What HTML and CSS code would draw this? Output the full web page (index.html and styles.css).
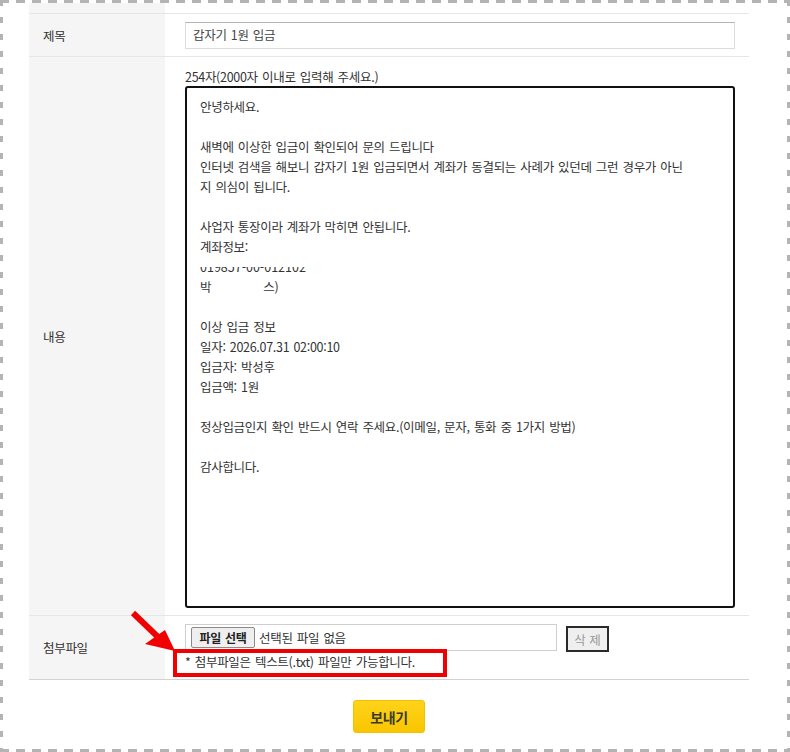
FILE: index.html
```html
<!DOCTYPE html>
<html lang="ko">
<head>
<meta charset="utf-8">
<title>문의하기</title>
<link rel="stylesheet" href="styles.css">
</head>
<body>
<div class="page">
  <div class="form">
    <div class="row row-cut">
      <div class="label"></div>
      <div class="field"></div>
    </div>
    <div class="row row-title">
      <div class="label">제목</div>
      <div class="field">
        <div class="input">갑자기 1원 입금</div>
      </div>
    </div>
    <div class="row row-content">
      <div class="label">내용</div>
      <div class="field">
        <div class="counter">254자(2000자 이내로 입력해 주세요.)</div>
        <div class="textarea">
          <div class="line">안녕하세요.</div>
          <div class="line"></div>
          <div class="line">새벽에 이상한 입금이 확인되어 문의 드립니다</div>
          <div class="line">인터넷 검색을 해보니 갑자기 1원 입금되면서 계좌가 동결되는 사례가 있던데 그런 경우가 아닌</div>
          <div class="line">지 의심이 됩니다.</div>
          <div class="line"></div>
          <div class="line">사업자 통장이라 계좌가 막히면 안됩니다.</div>
          <div class="line">계좌정보:</div>
          <div class="line redacted">019857-00-012102</div>
          <div class="line">박<span class="gap">스)</span></div>
          <div class="line"></div>
          <div class="line">이상 입금 정보</div>
          <div class="line">일자: 2026.07.31 02:00:10</div>
          <div class="line">입금자: 박성후</div>
          <div class="line">입금액: 1원</div>
          <div class="line"></div>
          <div class="line">정상입금인지 확인 반드시 연락 주세요.(이메일, 문자, 통화 중 1가지 방법)</div>
          <div class="line"></div>
          <div class="line">감사합니다.</div>
        </div>
      </div>
    </div>
    <div class="row row-file">
      <div class="label">첨부파일</div>
      <div class="field">
        <div class="file-line">
          <div class="file-box">
            <span class="file-btn">파일 선택</span>
            <span class="file-name">선택된 파일 없음</span>
          </div>
          <button class="del-btn" type="button">삭 제</button>
        </div>
        <div class="note">* 첨부파일은 텍스트(.txt) 파일만 가능합니다.</div>
      </div>
    </div>
  </div>
  <div class="actions">
    <button class="submit" type="button">보내기</button>
  </div>
</div>
<svg class="annotation" width="790" height="752" viewBox="0 0 790 752" aria-hidden="true">
  <line x1="133" y1="613" x2="158" y2="637" stroke="#f00000" stroke-width="6"/>
  <polygon points="145,644 165,630 175,651" fill="#f00000"/>
  <rect x="175" y="651" width="270" height="24" fill="none" stroke="#f00000" stroke-width="4"/>
</svg>
</body>
</html>
```

FILE: styles.css
```css
html, body {
  margin: 0;
  padding: 0;
  background: #fff;
}

body {
  position: relative;
  width: 790px;
  height: 752px;
  overflow: hidden;
  font-family: "Noto Sans CJK KR", "Liberation Sans", sans-serif;
  font-size: 12.5px;
  color: #333;
  letter-spacing: -0.3px;
  word-spacing: 1px;
}

.page {
  box-sizing: border-box;
  width: 790px;
  height: 752px;
  padding: 3px 41px 3px 29px;
  background:
    repeating-linear-gradient(90deg, #b4b4b4 0 9px, transparent 9px 16px) left top / 100% 3px no-repeat,
    repeating-linear-gradient(90deg, #b4b4b4 0 9px, transparent 9px 16px) left bottom / 100% 3px no-repeat,
    repeating-linear-gradient(180deg, #b4b4b4 0 6px, transparent 6px 17px) left top / 3px 100% no-repeat,
    repeating-linear-gradient(180deg, #b4b4b4 0 6px, transparent 6px 17px) right top / 3px 100% no-repeat,
    #fff;
}

.form {
  width: 720px;
}

.row {
  display: grid;
  grid-template-columns: 136px 1fr;
  border-bottom: 1px solid #e6e6e6;
}

.row-cut {
  height: 10px;
}

.row-file {
  border-bottom-color: #d2d2d2;
}

.label {
  display: flex;
  align-items: center;
  padding-left: 14px;
  background: #f5f5f5;
  color: #333;
}

.field {
  padding: 8px 14px 7px 20px;
}

.row-cut .field {
  padding: 0;
}

.input {
  box-sizing: border-box;
  height: 27px;
  border: 1px solid #dcdcdc;
  border-top-color: #b5b5b5;
  padding-left: 7px;
  line-height: 24px;
  color: #444;
}

.row-content .field {
  padding-top: 10px;
}

.counter {
  height: 19px;
  line-height: 19px;
  color: #333;
}

.textarea {
  box-sizing: border-box;
  height: 522px;
  border: 2px solid #111;
  border-radius: 3px;
  padding: 9px 13px;
  color: #333;
}

.line {
  height: 20px;
  line-height: 20px;
  white-space: nowrap;
}

.redacted {
  clip-path: inset(10px 0 0 0);
  letter-spacing: 0;
}

.gap {
  margin-left: 52px;
}

.row-file .field {
  padding: 8px 14px 6px 20px;
}

.file-line {
  display: flex;
  align-items: flex-start;
  height: 27px;
}

.file-box {
  box-sizing: border-box;
  display: flex;
  align-items: center;
  width: 372px;
  height: 27px;
  border: 1px solid #cfcfcf;
  padding: 0 5px;
}

.file-btn {
  box-sizing: border-box;
  display: flex;
  align-items: center;
  justify-content: center;
  width: 64px;
  height: 21px;
  border: 1px solid #8a8a8a;
  border-radius: 2px;
  background: #efefef;
  color: #222;
  font-weight: 700;
  font-size: 12px;
  letter-spacing: -0.3px;
}

.file-name {
  margin-left: 4px;
  color: #333;
}

.del-btn {
  box-sizing: border-box;
  width: 43px;
  height: 26px;
  margin: 2px 0 0 9px;
  padding: 0;
  border: 2px solid #2a2a2a;
  background: #efefef;
  color: #9a9a9a;
  font-family: inherit;
  font-size: 12.5px;
  letter-spacing: 0;
}

.note {
  height: 22px;
  line-height: 22px;
  color: #333;
}

.actions {
  width: 720px;
  display: flex;
  justify-content: center;
  padding-top: 20px;
}

.submit {
  box-sizing: border-box;
  width: 72px;
  height: 33px;
  padding: 0;
  border: 1px solid #f2c200;
  border-radius: 3px;
  background: linear-gradient(#ffd31a, #f9c500);
  color: #3a3a2a;
  font-family: inherit;
  font-size: 14px;
  font-weight: 700;
  letter-spacing: -0.3px;
}

.annotation {
  position: absolute;
  left: 0;
  top: 0;
  pointer-events: none;
}
```
